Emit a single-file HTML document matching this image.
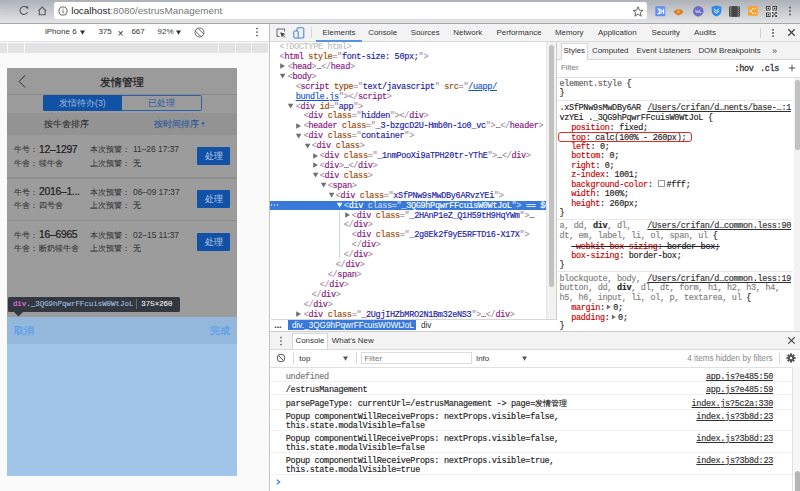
<!DOCTYPE html><html><head><meta charset="utf-8"><style>
html,body{margin:0;padding:0;width:800px;height:491px;overflow:hidden;background:#fff;position:relative}
body{font-family:"Liberation Sans",sans-serif}
.m{-webkit-text-stroke:0.15px}
</style></head><body>
<div style="position:absolute;left:0px;top:0px;width:800px;height:23px;background:linear-gradient(#adb1b8,#e3e4e6)"></div>
<div style="position:absolute;left:0px;top:23px;width:800px;height:1px;background:#a9a9a9"></div>
<div style="position:absolute;left:54.3px;top:1.7px;width:592.7px;height:17.4px;background:#fff;border-radius:2.5px"></div>
<svg style="position:absolute;left:0;top:4.5px" width="10" height="12"><path d="M-1 6 H8 M4.6 2.4 L8.1 6 L4.6 9.6" stroke="#c6c6c6" stroke-width="0.9" fill="none"/></svg>
<svg style="position:absolute;left:17.5px;top:4.9px" width="12" height="11"><path d="M9.3 3.2 A4 4 0 1 0 9.6 7.2" stroke="#5a5a5a" stroke-width="1.1" fill="none"/><path d="M7.2 1.2 L10.2 1.2 L10.2 4.2Z" fill="#5a5a5a"/></svg>
<svg style="position:absolute;left:36.5px;top:6px" width="11" height="10"><path d="M1.3 4.8 L5.2 1 L9.1 4.8 M2.3 4 V8.7 H8.1 V4" stroke="#5a5a5a" stroke-width="1.1" fill="none"/></svg>
<svg style="position:absolute;left:58px;top:6px" width="10" height="10"><circle cx="5" cy="5" r="4.1" stroke="#555" stroke-width="0.9" fill="none"/><rect x="4.55" y="4.2" width="0.9" height="3" fill="#555"/><rect x="4.55" y="2.5" width="0.9" height="0.9" fill="#555"/></svg>
<div style="position:absolute;left:71.2px;top:5.40px;line-height:12px;font-size:9.9px;font-family:'Liberation Sans', sans-serif;color:#222;white-space:pre;"><span style="color:#222">localhost</span><span style="color:#777">:8080/estrusManagement</span></div>
<svg style="position:absolute;left:632px;top:5.5px" width="12" height="11"><path d="M6 0.8 L7.4 4.2 L11 4.4 L8.2 6.7 L9.2 10.2 L6 8.2 L2.8 10.2 L3.8 6.7 L1 4.4 L4.6 4.2Z" stroke="#555" stroke-width="0.9" fill="none"/></svg>
<svg style="position:absolute;left:654.5px;top:5.5px" width="11" height="11"><rect x="0.3" y="0.3" width="10" height="10" rx="1.2" fill="#5f90ee"/><path d="M2.3 3 H4.3 V7.8 H2.3 M6 2.8 V8 M8.6 2.8 V8 M6 5.4 H8.6" stroke="#fff" stroke-width="1.1" fill="none"/></svg>
<svg style="position:absolute;left:673px;top:4.5px" width="11" height="12"><path d="M0.5 6.5 Q5.5 2 10.5 6.5 Q8 10 6 10 L5.5 11.5 L5 10 Q3 10 0.5 6.5Z" fill="#de7a26"/><path d="M3.5 5.8 L5.5 8 L7.5 5.8 L6.6 6.6 L5.5 5.2 L4.4 6.6Z" fill="#f6d24a"/><path d="M5.5 1 L6 3.5 L5 3.5Z" fill="#f0b060"/></svg>
<svg style="position:absolute;left:692.5px;top:5.5px" width="11" height="11"><circle cx="5.3" cy="5.3" r="4.9" fill="#6c6cc9"/><circle cx="5.3" cy="5.3" r="4.9" fill="none" stroke="#5858b0" stroke-width="0.5"/><path d="M2.5 3.8 L3.5 7 L4.6 4.6 L5.7 7 L6.7 3.8" stroke="#dcdcf5" stroke-width="0.8" fill="none"/><circle cx="7.8" cy="6.5" r="0.8" fill="#dcdcf5"/></svg>
<svg style="position:absolute;left:710.5px;top:5px" width="11" height="12"><path d="M5.5 0.4 Q8 1.5 10.3 1.6 V6 Q10.3 9.6 5.5 11.6 Q0.7 9.6 0.7 6 V1.6 Q3 1.5 5.5 0.4Z" fill="#2b86f0"/><path d="M2.8 3.8 L5.5 6 L8.2 3.8 M2.8 6 L5.5 8.2 L8.2 6" stroke="#fff" stroke-width="1" fill="none"/></svg>
<svg style="position:absolute;left:729px;top:5.5px" width="11" height="11"><rect x="0" y="0.3" width="11" height="10.4" rx="1" fill="#505050"/><rect x="3" y="0.3" width="5" height="10.4" fill="#454545"/><g fill="#9a9a9a"><rect x="1" y="1.3" width="1.3" height="1.2"/><rect x="1" y="3.6" width="1.3" height="1.2"/><rect x="1" y="5.9" width="1.3" height="1.2"/><rect x="1" y="8.2" width="1.3" height="1.2"/><rect x="8.7" y="1.3" width="1.3" height="1.2"/><rect x="8.7" y="3.6" width="1.3" height="1.2"/><rect x="8.7" y="5.9" width="1.3" height="1.2"/><rect x="8.7" y="8.2" width="1.3" height="1.2"/></g></svg>
<svg style="position:absolute;left:748.3px;top:5.8px" width="10" height="10"><rect x="0" y="0" width="9.8" height="9.8" rx="1" fill="#f5a234"/><g fill="#fff"><circle cx="2.5" cy="5" r="0.9"/><circle cx="5" cy="2.6" r="0.7"/><circle cx="7.4" cy="2.6" r="0.7"/><circle cx="5" cy="7.4" r="0.7"/><circle cx="7.4" cy="7.4" r="0.7"/></g><path d="M2.5 5 L5 2.6 M2.5 5 L5 7.4" stroke="#fff" stroke-width="0.6"/></svg>
<svg style="position:absolute;left:766px;top:5.5px" width="11" height="11"><rect x="0" y="0" width="11" height="11" fill="#e8e8e8"/><g fill="#3a3a3a"><rect x="0" y="0" width="4.6" height="4.6"/><rect x="6.4" y="0" width="4.6" height="4.6"/><rect x="0" y="6.4" width="4.6" height="4.6"/><rect x="6" y="6" width="1.6" height="1.6"/><rect x="9" y="6" width="2" height="1.6"/><rect x="7.6" y="7.6" width="1.6" height="1.6"/><rect x="6" y="9.2" width="1.6" height="1.8"/><rect x="9.2" y="9.2" width="1.8" height="1.8"/></g><g fill="#e8e8e8"><rect x="0.9" y="0.9" width="2.8" height="2.8"/><rect x="7.3" y="0.9" width="2.8" height="2.8"/><rect x="0.9" y="7.3" width="2.8" height="2.8"/></g><g fill="#222"><rect x="1.6" y="1.6" width="1.4" height="1.4"/><rect x="8" y="1.6" width="1.4" height="1.4"/><rect x="1.6" y="8" width="1.4" height="1.4"/></g></svg>
<svg style="position:absolute;left:788px;top:6px" width="4" height="11"><circle cx="2" cy="1.5" r="0.9" fill="#555"/><circle cx="2" cy="5" r="0.9" fill="#555"/><circle cx="2" cy="8.5" r="0.9" fill="#555"/></svg>
<div style="position:absolute;left:0px;top:24px;width:269px;height:467px;background:#fafafa"></div>
<div style="position:absolute;left:0px;top:24px;width:269px;height:17.5px;background:#fff"></div>
<div style="position:absolute;left:0px;top:41.3px;width:269px;height:1px;background:#e2e2e2"></div>
<div style="position:absolute;left:45px;top:27.00px;line-height:10px;font-size:8px;font-family:'Liberation Sans', sans-serif;color:#333;white-space:pre;">iPhone 6</div>
<svg style="position:absolute;left:79.5px;top:29.5px" width="6" height="6"><path d="M0 0.5 L5 0.5 L2.5 4.8Z" fill="#333"/></svg>
<div style="position:absolute;left:98.4px;top:27.00px;line-height:10px;font-size:8px;font-family:'Liberation Sans', sans-serif;color:#333;white-space:pre;">375</div>
<div style="position:absolute;left:117.6px;top:27.40px;line-height:12px;font-size:10.5px;font-family:'Liberation Sans', sans-serif;color:#333;white-space:pre;">×</div>
<div style="position:absolute;left:131.4px;top:27.00px;line-height:10px;font-size:8px;font-family:'Liberation Sans', sans-serif;color:#333;white-space:pre;">667</div>
<div style="position:absolute;left:157.5px;top:27.00px;line-height:10px;font-size:8px;font-family:'Liberation Sans', sans-serif;color:#333;white-space:pre;">92%</div>
<svg style="position:absolute;left:176px;top:29.5px" width="6" height="6"><path d="M0 0.5 L5 0.5 L2.5 4.8Z" fill="#333"/></svg>
<svg style="position:absolute;left:193.9px;top:26.6px" width="11" height="11"><circle cx="5.5" cy="5.5" r="4.5" stroke="#5a5a5a" stroke-width="0.9" fill="none"/><rect x="3.6" y="1.2" width="3.8" height="8.6" rx="0.5" transform="rotate(-45 5.5 5.5)" stroke="#5a5a5a" stroke-width="0.9" fill="#fff"/></svg>
<svg style="position:absolute;left:254.5px;top:27px" width="4" height="11"><circle cx="2" cy="1.5" r="0.85" fill="#444"/><circle cx="2" cy="5" r="0.85" fill="#444"/><circle cx="2" cy="8.5" r="0.85" fill="#444"/></svg>
<div style="position:absolute;left:0px;top:43px;width:7.3px;height:10.2px;background:#e3e3e3"></div>
<div style="position:absolute;left:8.3px;top:43px;width:16.0px;height:10.2px;background:#e3e3e3"></div>
<div style="position:absolute;left:25.3px;top:43px;width:193.0px;height:10.2px;background:#e3e3e3"></div>
<div style="position:absolute;left:219.3px;top:43px;width:16.0px;height:10.2px;background:#e3e3e3"></div>
<div style="position:absolute;left:236.3px;top:43px;width:15.0px;height:10.2px;background:#e3e3e3"></div>
<div style="position:absolute;left:252.3px;top:43px;width:16.0px;height:10.2px;background:#e3e3e3"></div>
<div style="position:absolute;left:7px;top:68px;width:229.8px;height:26.5px;background:#9b9b9b"></div>
<div style="position:absolute;left:7px;top:94.2px;width:229.8px;height:0.6px;background:#8a8a8a"></div>
<svg style="position:absolute;left:18px;top:74px" width="10" height="15"><path d="M7.2 1.1 L1.2 7.5 L7.2 13.6" stroke="#2e2e2e" stroke-width="1" fill="none"/></svg>
<div style="position:absolute;left:7px;top:74.60px;line-height:14px;font-size:10.8px;font-family:'Liberation Sans', sans-serif;color:#1a1a1a;white-space:pre;width:229.8px;text-align:center;-webkit-text-stroke:0.22px">发情管理</div>
<div style="position:absolute;left:7px;top:94.8px;width:229.8px;height:18.6px;background:#9b9b9b"></div>
<div style="position:absolute;left:42.6px;top:95.4px;width:159px;height:15.2px;border:0.9px solid #2b62ae;box-sizing:border-box;border-radius:1.5px"></div>
<div style="position:absolute;left:42.6px;top:95.4px;width:79.5px;height:15.2px;background:#1252a4;border-radius:1.5px 0 0 1.5px"></div>
<div style="position:absolute;left:42.6px;top:96.80px;line-height:12px;font-size:8.6px;font-family:'Liberation Sans', sans-serif;color:#9bb5d8;white-space:pre;width:79.5px;text-align:center">发情待办(3)</div>
<div style="position:absolute;left:122.1px;top:96.80px;line-height:12px;font-size:8.6px;font-family:'Liberation Sans', sans-serif;color:#1f5aa8;white-space:pre;width:79.5px;text-align:center">已处理</div>
<div style="position:absolute;left:7px;top:113.4px;width:229.8px;height:21.6px;background:#939393"></div>
<div style="position:absolute;left:43.5px;top:117.60px;line-height:12px;font-size:8.6px;font-family:'Liberation Sans', sans-serif;color:#2a2a2a;white-space:pre;-webkit-text-stroke:0.08px">按牛舍排序</div>
<div style="position:absolute;left:153.6px;top:117.60px;line-height:12px;font-size:8.6px;font-family:'Liberation Sans', sans-serif;color:#1f55a0;white-space:pre;-webkit-text-stroke:0.08px">按时间排序</div>
<svg style="position:absolute;left:200.5px;top:121px" width="4" height="7"><path d="M2 0.5 L3.6 3 L0.4 3Z" fill="#1f55a0"/><path d="M2 5.8 L3.6 3.5 L0.4 3.5Z" fill="#5d7fae"/></svg>
<div style="position:absolute;left:7px;top:135px;width:229.8px;height:182px;background:#9c9c9c"></div>
<div style="position:absolute;left:13.5px;top:143.40px;line-height:12px;font-size:8.4px;font-family:'Liberation Sans', sans-serif;color:#383838;white-space:pre;-webkit-text-stroke:0.08px">牛号：</div>
<div style="position:absolute;left:39px;top:142.60px;line-height:13px;font-size:10.4px;font-family:'Liberation Sans', sans-serif;color:#222;white-space:pre;-webkit-text-stroke:0.22px #222;letter-spacing:-0.3px">12–1297</div>
<div style="position:absolute;left:90px;top:143.40px;line-height:12px;font-size:8.4px;font-family:'Liberation Sans', sans-serif;color:#383838;white-space:pre;-webkit-text-stroke:0.08px">本次预警：</div>
<div style="position:absolute;left:133px;top:143.40px;line-height:12px;font-size:8.4px;font-family:'Liberation Sans', sans-serif;color:#383838;white-space:pre;-webkit-text-stroke:0.08px">11–26 17:37</div>
<div style="position:absolute;left:13.5px;top:156.60px;line-height:12px;font-size:8.4px;font-family:'Liberation Sans', sans-serif;color:#383838;white-space:pre;-webkit-text-stroke:0.08px">牛舍：</div>
<div style="position:absolute;left:39px;top:156.60px;line-height:12px;font-size:8.4px;font-family:'Liberation Sans', sans-serif;color:#383838;white-space:pre;-webkit-text-stroke:0.08px">犊牛舍</div>
<div style="position:absolute;left:90px;top:156.60px;line-height:12px;font-size:8.4px;font-family:'Liberation Sans', sans-serif;color:#383838;white-space:pre;-webkit-text-stroke:0.08px">上次预警：</div>
<div style="position:absolute;left:133px;top:156.60px;line-height:12px;font-size:8.4px;font-family:'Liberation Sans', sans-serif;color:#383838;white-space:pre;-webkit-text-stroke:0.08px">无</div>
<div style="position:absolute;left:197.2px;top:147.1px;width:33.2px;height:18.1px;background:#1252a6;border-radius:1px;color:#b3c6e2;font-size:8.6px;line-height:18.1px;text-align:center;-webkit-text-stroke:0.05px">处理</div>
<div style="position:absolute;left:7px;top:177.15px;width:229.8px;height:1.6px;background:#8d8d8d"></div>
<div style="position:absolute;left:13.5px;top:186.15px;line-height:12px;font-size:8.4px;font-family:'Liberation Sans', sans-serif;color:#383838;white-space:pre;-webkit-text-stroke:0.08px">牛号：</div>
<div style="position:absolute;left:39px;top:185.35px;line-height:13px;font-size:10.4px;font-family:'Liberation Sans', sans-serif;color:#222;white-space:pre;-webkit-text-stroke:0.22px #222;letter-spacing:-0.3px">2016–1...</div>
<div style="position:absolute;left:90px;top:186.15px;line-height:12px;font-size:8.4px;font-family:'Liberation Sans', sans-serif;color:#383838;white-space:pre;-webkit-text-stroke:0.08px">本次预警：</div>
<div style="position:absolute;left:133px;top:186.15px;line-height:12px;font-size:8.4px;font-family:'Liberation Sans', sans-serif;color:#383838;white-space:pre;-webkit-text-stroke:0.08px">06–09 17:37</div>
<div style="position:absolute;left:13.5px;top:199.35px;line-height:12px;font-size:8.4px;font-family:'Liberation Sans', sans-serif;color:#383838;white-space:pre;-webkit-text-stroke:0.08px">牛舍：</div>
<div style="position:absolute;left:39px;top:199.35px;line-height:12px;font-size:8.4px;font-family:'Liberation Sans', sans-serif;color:#383838;white-space:pre;-webkit-text-stroke:0.08px">四号舍</div>
<div style="position:absolute;left:90px;top:199.35px;line-height:12px;font-size:8.4px;font-family:'Liberation Sans', sans-serif;color:#383838;white-space:pre;-webkit-text-stroke:0.08px">上次预警：</div>
<div style="position:absolute;left:133px;top:199.35px;line-height:12px;font-size:8.4px;font-family:'Liberation Sans', sans-serif;color:#383838;white-space:pre;-webkit-text-stroke:0.08px">无</div>
<div style="position:absolute;left:197.2px;top:189.85px;width:33.2px;height:18.1px;background:#1252a6;border-radius:1px;color:#b3c6e2;font-size:8.6px;line-height:18.1px;text-align:center;-webkit-text-stroke:0.05px">处理</div>
<div style="position:absolute;left:7px;top:219.9px;width:229.8px;height:1.6px;background:#8d8d8d"></div>
<div style="position:absolute;left:13.5px;top:228.90px;line-height:12px;font-size:8.4px;font-family:'Liberation Sans', sans-serif;color:#383838;white-space:pre;-webkit-text-stroke:0.08px">牛号：</div>
<div style="position:absolute;left:39px;top:228.10px;line-height:13px;font-size:10.4px;font-family:'Liberation Sans', sans-serif;color:#222;white-space:pre;-webkit-text-stroke:0.22px #222;letter-spacing:-0.3px">16–6965</div>
<div style="position:absolute;left:90px;top:228.90px;line-height:12px;font-size:8.4px;font-family:'Liberation Sans', sans-serif;color:#383838;white-space:pre;-webkit-text-stroke:0.08px">本次预警：</div>
<div style="position:absolute;left:133px;top:228.90px;line-height:12px;font-size:8.4px;font-family:'Liberation Sans', sans-serif;color:#383838;white-space:pre;-webkit-text-stroke:0.08px">02–15 11:37</div>
<div style="position:absolute;left:13.5px;top:242.10px;line-height:12px;font-size:8.4px;font-family:'Liberation Sans', sans-serif;color:#383838;white-space:pre;-webkit-text-stroke:0.08px">牛舍：</div>
<div style="position:absolute;left:39px;top:242.10px;line-height:12px;font-size:8.4px;font-family:'Liberation Sans', sans-serif;color:#383838;white-space:pre;-webkit-text-stroke:0.08px">断奶犊牛舍</div>
<div style="position:absolute;left:90px;top:242.10px;line-height:12px;font-size:8.4px;font-family:'Liberation Sans', sans-serif;color:#383838;white-space:pre;-webkit-text-stroke:0.08px">上次预警：</div>
<div style="position:absolute;left:133px;top:242.10px;line-height:12px;font-size:8.4px;font-family:'Liberation Sans', sans-serif;color:#383838;white-space:pre;-webkit-text-stroke:0.08px">无</div>
<div style="position:absolute;left:197.2px;top:232.6px;width:33.2px;height:18.1px;background:#1252a6;border-radius:1px;color:#b3c6e2;font-size:8.6px;line-height:18.1px;text-align:center;-webkit-text-stroke:0.05px">处理</div>
<div style="position:absolute;left:7px;top:316.7px;width:229.8px;height:159.2px;background:#a0c5e8"></div>
<div style="position:absolute;left:7px;top:316.7px;width:229.8px;height:26.9px;background:#93b8dc"></div>
<div style="position:absolute;left:13.6px;top:325.00px;line-height:12px;font-size:9.6px;font-family:'Liberation Sans', sans-serif;color:#58a0e8;white-space:pre;-webkit-text-stroke:0.22px">取消</div>
<div style="position:absolute;left:210px;top:325.00px;line-height:12px;font-size:9.6px;font-family:'Liberation Sans', sans-serif;color:#58a0e8;white-space:pre;-webkit-text-stroke:0.22px">完成</div>
<div style="position:absolute;left:7.5px;top:296.6px;width:172.5px;height:15px;background:#333740;border-radius:1.5px"></div>
<svg style="position:absolute;left:14px;top:311.5px" width="9" height="5"><path d="M0 0 L9 0 L4.5 4.5Z" fill="#333740"/></svg>
<div class="m" style="position:absolute;left:12.9px;top:299.10px;line-height:10px;font-size:7.45px;font-family:'Liberation Mono', monospace;color:#222;white-space:pre;"><span style="color:#ee78e6">div</span><span style="color:#9bbbdc">._3QG9hPqwrFFcuisW0WtJoL</span></div>
<div style="position:absolute;left:136.2px;top:299px;width:0.7px;height:10px;background:#6a6a6a"></div>
<div class="m" style="position:absolute;left:141.3px;top:299.10px;line-height:10px;font-size:7.45px;font-family:'Liberation Mono', monospace;color:#222;white-space:pre;"><span style="color:#e8e8e8">375×260</span></div>
<div style="position:absolute;left:269px;top:24px;width:1px;height:467px;background:#c3c3c3"></div>
<div style="position:absolute;left:270px;top:24px;width:530px;height:17.5px;background:#f3f3f3"></div>
<div style="position:absolute;left:270px;top:41px;width:530px;height:0.9px;background:#d9d9d9"></div>
<svg style="position:absolute;left:276px;top:27.5px" width="11" height="10"><path d="M3.5 8.5 H1 V1 H8.5 V3.5" stroke="#5a5a5a" stroke-width="0.9" fill="none"/><path d="M4.2 4.2 L9.6 6.1 L7.2 7 L9.2 9 L8.7 9.5 L6.7 7.5 L5.9 9.8Z" fill="#444"/></svg>
<svg style="position:absolute;left:293px;top:26.5px" width="12" height="12"><rect x="4" y="0.8" width="6.8" height="10.2" rx="0.8" stroke="#3b7ddd" stroke-width="1" fill="none"/><rect x="0.8" y="4" width="4.4" height="7" rx="0.6" fill="#f3f3f3" stroke="#3b7ddd" stroke-width="1"/></svg>
<div style="position:absolute;left:311px;top:27px;width:0.7px;height:11px;background:#d6d6d6"></div>
<div style="position:absolute;left:322.6px;top:27.80px;line-height:10px;font-size:7.9px;font-family:'Liberation Sans', sans-serif;color:#333;white-space:pre;">Elements</div>
<div style="position:absolute;left:368.2px;top:27.80px;line-height:10px;font-size:7.9px;font-family:'Liberation Sans', sans-serif;color:#333;white-space:pre;">Console</div>
<div style="position:absolute;left:410.7px;top:27.80px;line-height:10px;font-size:7.9px;font-family:'Liberation Sans', sans-serif;color:#333;white-space:pre;">Sources</div>
<div style="position:absolute;left:453.3px;top:27.80px;line-height:10px;font-size:7.9px;font-family:'Liberation Sans', sans-serif;color:#333;white-space:pre;">Network</div>
<div style="position:absolute;left:496.5px;top:27.80px;line-height:10px;font-size:7.9px;font-family:'Liberation Sans', sans-serif;color:#333;white-space:pre;">Performance</div>
<div style="position:absolute;left:555px;top:27.80px;line-height:10px;font-size:7.9px;font-family:'Liberation Sans', sans-serif;color:#333;white-space:pre;">Memory</div>
<div style="position:absolute;left:598px;top:27.80px;line-height:10px;font-size:7.9px;font-family:'Liberation Sans', sans-serif;color:#333;white-space:pre;">Application</div>
<div style="position:absolute;left:651.5px;top:27.80px;line-height:10px;font-size:7.9px;font-family:'Liberation Sans', sans-serif;color:#333;white-space:pre;">Security</div>
<div style="position:absolute;left:694px;top:27.80px;line-height:10px;font-size:7.9px;font-family:'Liberation Sans', sans-serif;color:#333;white-space:pre;">Audits</div>
<div style="position:absolute;left:315.9px;top:40.2px;width:46.1px;height:1.8px;background:#5a92e2"></div>
<div style="position:absolute;left:760px;top:27.5px;width:0.8px;height:10px;background:#d0d0d0"></div>
<svg style="position:absolute;left:771.4px;top:27.6px" width="4" height="11"><circle cx="2" cy="1.8" r="0.9" fill="#444"/><circle cx="2" cy="4.9" r="0.9" fill="#444"/><circle cx="2" cy="8.1" r="0.9" fill="#444"/></svg>
<svg style="position:absolute;left:787.3px;top:28px" width="9" height="9"><path d="M1.3 1.3 L7.7 7.7 M7.7 1.3 L1.3 7.7" stroke="#444" stroke-width="1.3" fill="none"/></svg>
<div class="m" style="position:absolute;left:279.6px;top:42.20px;line-height:10px;font-size:8.5px;font-family:'Liberation Mono', monospace;color:#222;white-space:pre;letter-spacing:-0.31px;"><span style="color:#c0c0c0">&lt;!DOCTYPE html&gt;</span></div>
<div class="m" style="position:absolute;left:279.6px;top:52.01px;line-height:10px;font-size:8.5px;font-family:'Liberation Mono', monospace;color:#222;white-space:pre;letter-spacing:-0.31px;"><span style="color:#a894a6">&lt;</span><span style="color:#881280">html</span> <span style="color:#994500">style</span><span style="color:#a894a6">=&quot;</span><span style="color:#1a1aa6">font-size: 50px;</span><span style="color:#a894a6">&quot;</span><span style="color:#a894a6">&gt;</span></div>
<svg style="position:absolute;left:280.43px;top:63.31999999999999px" width="6" height="6"><path d="M0.2 0.3 L5 3 L0.2 5.7Z" fill="#6e6e6e"/></svg>
<div class="m" style="position:absolute;left:287.63px;top:61.92px;line-height:10px;font-size:8.5px;font-family:'Liberation Mono', monospace;color:#222;white-space:pre;letter-spacing:-0.31px;"><span style="color:#a894a6">&lt;</span><span style="color:#881280">head</span><span style="color:#a894a6">&gt;</span><span style="color:#333">…</span><span style="color:#a894a6">&lt;/</span><span style="color:#881280">head</span><span style="color:#a894a6">&gt;</span></div>
<svg style="position:absolute;left:280.43px;top:73.23px" width="6" height="6"><path d="M-0.2 0.7 L5.4 0.7 L2.6 5.5Z" fill="#6e6e6e"/></svg>
<div class="m" style="position:absolute;left:287.63px;top:71.83px;line-height:10px;font-size:8.5px;font-family:'Liberation Mono', monospace;color:#222;white-space:pre;letter-spacing:-0.31px;"><span style="color:#a894a6">&lt;</span><span style="color:#881280">body</span><span style="color:#a894a6">&gt;</span></div>
<div class="m" style="position:absolute;left:295.66px;top:81.74px;line-height:10px;font-size:8.5px;font-family:'Liberation Mono', monospace;color:#222;white-space:pre;letter-spacing:-0.31px;"><span style="color:#a894a6">&lt;</span><span style="color:#881280">script</span> <span style="color:#994500">type</span><span style="color:#a894a6">=&quot;</span><span style="color:#1a1aa6">text/javascript</span><span style="color:#a894a6">&quot;</span> <span style="color:#994500">src</span><span style="color:#a894a6">=&quot;</span><span style="color:#1155cc;text-decoration:underline">/uapp/</span></div>
<div class="m" style="position:absolute;left:295.66px;top:91.65px;line-height:10px;font-size:8.5px;font-family:'Liberation Mono', monospace;color:#222;white-space:pre;letter-spacing:-0.31px;"><span style="color:#1155cc;text-decoration:underline">bundle.js</span><span style="color:#a894a6">&quot;</span><span style="color:#a894a6">&gt;</span><span style="color:#a894a6">&lt;/</span><span style="color:#881280">script</span><span style="color:#a894a6">&gt;</span></div>
<svg style="position:absolute;left:288.46000000000004px;top:102.96000000000001px" width="6" height="6"><path d="M-0.2 0.7 L5.4 0.7 L2.6 5.5Z" fill="#6e6e6e"/></svg>
<div class="m" style="position:absolute;left:295.66px;top:101.56px;line-height:10px;font-size:8.5px;font-family:'Liberation Mono', monospace;color:#222;white-space:pre;letter-spacing:-0.31px;"><span style="color:#a894a6">&lt;</span><span style="color:#881280">div</span> <span style="color:#994500">id</span><span style="color:#a894a6">=&quot;</span><span style="color:#1a1aa6">app</span><span style="color:#a894a6">&quot;</span><span style="color:#a894a6">&gt;</span></div>
<div class="m" style="position:absolute;left:303.69px;top:111.47px;line-height:10px;font-size:8.5px;font-family:'Liberation Mono', monospace;color:#222;white-space:pre;letter-spacing:-0.31px;"><span style="color:#a894a6">&lt;</span><span style="color:#881280">div</span> <span style="color:#994500">class</span><span style="color:#a894a6">=&quot;</span><span style="color:#1a1aa6">hidden</span><span style="color:#a894a6">&quot;</span><span style="color:#a894a6">&gt;</span><span style="color:#a894a6">&lt;/</span><span style="color:#881280">div</span><span style="color:#a894a6">&gt;</span></div>
<svg style="position:absolute;left:296.49px;top:122.78px" width="6" height="6"><path d="M0.2 0.3 L5 3 L0.2 5.7Z" fill="#6e6e6e"/></svg>
<div class="m" style="position:absolute;left:303.69px;top:121.38px;line-height:10px;font-size:8.5px;font-family:'Liberation Mono', monospace;color:#222;white-space:pre;letter-spacing:-0.31px;"><span style="color:#a894a6">&lt;</span><span style="color:#881280">header</span> <span style="color:#994500">class</span><span style="color:#a894a6">=&quot;</span><span style="color:#1a1aa6">_3-bzgcD2U-Hmb0n-1o0_vc</span><span style="color:#a894a6">&quot;</span><span style="color:#a894a6">&gt;</span><span style="color:#333">…</span><span style="color:#a894a6">&lt;/</span><span style="color:#881280">header</span><span style="color:#a894a6">&gt;</span></div>
<svg style="position:absolute;left:296.49px;top:132.69px" width="6" height="6"><path d="M-0.2 0.7 L5.4 0.7 L2.6 5.5Z" fill="#6e6e6e"/></svg>
<div class="m" style="position:absolute;left:303.69px;top:131.29px;line-height:10px;font-size:8.5px;font-family:'Liberation Mono', monospace;color:#222;white-space:pre;letter-spacing:-0.31px;"><span style="color:#a894a6">&lt;</span><span style="color:#881280">div</span> <span style="color:#994500">class</span><span style="color:#a894a6">=&quot;</span><span style="color:#1a1aa6">container</span><span style="color:#a894a6">&quot;</span><span style="color:#a894a6">&gt;</span></div>
<svg style="position:absolute;left:304.52000000000004px;top:142.6px" width="6" height="6"><path d="M-0.2 0.7 L5.4 0.7 L2.6 5.5Z" fill="#6e6e6e"/></svg>
<div class="m" style="position:absolute;left:311.72px;top:141.20px;line-height:10px;font-size:8.5px;font-family:'Liberation Mono', monospace;color:#222;white-space:pre;letter-spacing:-0.31px;"><span style="color:#a894a6">&lt;</span><span style="color:#881280">div</span> <span style="color:#994500">class</span><span style="color:#a894a6">&gt;</span></div>
<svg style="position:absolute;left:312.55px;top:152.51px" width="6" height="6"><path d="M0.2 0.3 L5 3 L0.2 5.7Z" fill="#6e6e6e"/></svg>
<div class="m" style="position:absolute;left:319.75px;top:151.11px;line-height:10px;font-size:8.5px;font-family:'Liberation Mono', monospace;color:#222;white-space:pre;letter-spacing:-0.31px;"><span style="color:#a894a6">&lt;</span><span style="color:#881280">div</span> <span style="color:#994500">class</span><span style="color:#a894a6">=&quot;</span><span style="color:#1a1aa6">_1nmPooXi9aTPH20tr-YThE</span><span style="color:#a894a6">&quot;</span><span style="color:#a894a6">&gt;</span><span style="color:#333">…</span><span style="color:#a894a6">&lt;/</span><span style="color:#881280">div</span><span style="color:#a894a6">&gt;</span></div>
<svg style="position:absolute;left:312.55px;top:162.42000000000002px" width="6" height="6"><path d="M0.2 0.3 L5 3 L0.2 5.7Z" fill="#6e6e6e"/></svg>
<div class="m" style="position:absolute;left:319.75px;top:161.02px;line-height:10px;font-size:8.5px;font-family:'Liberation Mono', monospace;color:#222;white-space:pre;letter-spacing:-0.31px;"><span style="color:#a894a6">&lt;</span><span style="color:#881280">div</span><span style="color:#a894a6">&gt;</span><span style="color:#333">…</span><span style="color:#a894a6">&lt;/</span><span style="color:#881280">div</span><span style="color:#a894a6">&gt;</span></div>
<svg style="position:absolute;left:312.55px;top:172.33px" width="6" height="6"><path d="M-0.2 0.7 L5.4 0.7 L2.6 5.5Z" fill="#6e6e6e"/></svg>
<div class="m" style="position:absolute;left:319.75px;top:170.93px;line-height:10px;font-size:8.5px;font-family:'Liberation Mono', monospace;color:#222;white-space:pre;letter-spacing:-0.31px;"><span style="color:#a894a6">&lt;</span><span style="color:#881280">div</span> <span style="color:#994500">class</span><span style="color:#a894a6">&gt;</span></div>
<svg style="position:absolute;left:320.58000000000004px;top:182.24px" width="6" height="6"><path d="M-0.2 0.7 L5.4 0.7 L2.6 5.5Z" fill="#6e6e6e"/></svg>
<div class="m" style="position:absolute;left:327.78000000000003px;top:180.84px;line-height:10px;font-size:8.5px;font-family:'Liberation Mono', monospace;color:#222;white-space:pre;letter-spacing:-0.31px;"><span style="color:#a894a6">&lt;</span><span style="color:#881280">span</span><span style="color:#a894a6">&gt;</span></div>
<svg style="position:absolute;left:328.61px;top:192.15px" width="6" height="6"><path d="M-0.2 0.7 L5.4 0.7 L2.6 5.5Z" fill="#6e6e6e"/></svg>
<div class="m" style="position:absolute;left:335.81px;top:190.75px;line-height:10px;font-size:8.5px;font-family:'Liberation Mono', monospace;color:#222;white-space:pre;letter-spacing:-0.31px;"><span style="color:#a894a6">&lt;</span><span style="color:#881280">div</span> <span style="color:#994500">class</span><span style="color:#a894a6">=&quot;</span><span style="color:#1a1aa6">xSfPNw9sMwDBy6ARvzYEi</span><span style="color:#a894a6">&quot;</span><span style="color:#a894a6">&gt;</span></div>
<div style="position:absolute;left:270px;top:200.7px;width:276.4px;height:9.1px;background:#3879d9"></div>
<svg style="position:absolute;left:270px;top:203px" width="10" height="4"><g fill="#fff"><circle cx="1.6" cy="2" r="0.7"/><circle cx="4.5" cy="2" r="0.7"/><circle cx="7.4" cy="2" r="0.7"/></g></svg>
<svg style="position:absolute;left:336.64000000000004px;top:202.06px" width="6" height="6"><path d="M-0.2 0.7 L5.4 0.7 L2.6 5.5Z" fill="#fff"/></svg>
<div class="m" style="position:absolute;left:343.84000000000003px;top:200.66px;line-height:10px;font-size:8.5px;font-family:'Liberation Mono', monospace;color:#222;white-space:pre;letter-spacing:-0.31px;"><span style="color:#c9dbf5">&lt;</span><span style="color:#fff">div</span> <span style="color:#c9dbf5">class</span><span style="color:#c9dbf5">="</span><span style="color:#fff">_3QG9hPqwrFFcuisW0WtJoL</span><span style="color:#c9dbf5">"&gt;</span><span style="color:#fff"> == $0</span></div>
<div style="position:absolute;left:338.5px;top:211px;width:0.8px;height:47px;background:#c6d7f0"></div>
<svg style="position:absolute;left:344.67px;top:211.97px" width="6" height="6"><path d="M0.2 0.3 L5 3 L0.2 5.7Z" fill="#6e6e6e"/></svg>
<div class="m" style="position:absolute;left:351.87px;top:210.57px;line-height:10px;font-size:8.5px;font-family:'Liberation Mono', monospace;color:#222;white-space:pre;letter-spacing:-0.31px;"><span style="color:#a894a6">&lt;</span><span style="color:#881280">div</span> <span style="color:#994500">class</span><span style="color:#a894a6">=&quot;</span><span style="color:#1a1aa6">_2HAnP1eZ_Q1H59tH9HqYWm</span><span style="color:#a894a6">&quot;</span><span style="color:#a894a6">&gt;</span><span style="color:#333">…</span></div>
<div class="m" style="position:absolute;left:343.84000000000003px;top:220.48px;line-height:10px;font-size:8.5px;font-family:'Liberation Mono', monospace;color:#222;white-space:pre;letter-spacing:-0.31px;"><span style="color:#a894a6">&lt;/</span><span style="color:#881280">div</span><span style="color:#a894a6">&gt;</span></div>
<div class="m" style="position:absolute;left:351.87px;top:230.39px;line-height:10px;font-size:8.5px;font-family:'Liberation Mono', monospace;color:#222;white-space:pre;letter-spacing:-0.31px;"><span style="color:#a894a6">&lt;</span><span style="color:#881280">div</span> <span style="color:#994500">class</span><span style="color:#a894a6">=&quot;</span><span style="color:#1a1aa6">_2g8Ek2f9yE5RFTD16-X17X</span><span style="color:#a894a6">&quot;</span><span style="color:#a894a6">&gt;</span></div>
<div class="m" style="position:absolute;left:351.87px;top:240.30px;line-height:10px;font-size:8.5px;font-family:'Liberation Mono', monospace;color:#222;white-space:pre;letter-spacing:-0.31px;"><span style="color:#a894a6">&lt;/</span><span style="color:#881280">div</span><span style="color:#a894a6">&gt;</span></div>
<div class="m" style="position:absolute;left:343.84000000000003px;top:250.21px;line-height:10px;font-size:8.5px;font-family:'Liberation Mono', monospace;color:#222;white-space:pre;letter-spacing:-0.31px;"><span style="color:#a894a6">&lt;/</span><span style="color:#881280">div</span><span style="color:#a894a6">&gt;</span></div>
<div class="m" style="position:absolute;left:335.81px;top:260.12px;line-height:10px;font-size:8.5px;font-family:'Liberation Mono', monospace;color:#222;white-space:pre;letter-spacing:-0.31px;"><span style="color:#a894a6">&lt;/</span><span style="color:#881280">div</span><span style="color:#a894a6">&gt;</span></div>
<div class="m" style="position:absolute;left:327.78000000000003px;top:270.03px;line-height:10px;font-size:8.5px;font-family:'Liberation Mono', monospace;color:#222;white-space:pre;letter-spacing:-0.31px;"><span style="color:#a894a6">&lt;/</span><span style="color:#881280">span</span><span style="color:#a894a6">&gt;</span></div>
<div class="m" style="position:absolute;left:319.75px;top:279.94px;line-height:10px;font-size:8.5px;font-family:'Liberation Mono', monospace;color:#222;white-space:pre;letter-spacing:-0.31px;"><span style="color:#a894a6">&lt;/</span><span style="color:#881280">div</span><span style="color:#a894a6">&gt;</span></div>
<div class="m" style="position:absolute;left:311.72px;top:289.85px;line-height:10px;font-size:8.5px;font-family:'Liberation Mono', monospace;color:#222;white-space:pre;letter-spacing:-0.31px;"><span style="color:#a894a6">&lt;/</span><span style="color:#881280">div</span><span style="color:#a894a6">&gt;</span></div>
<div class="m" style="position:absolute;left:303.69px;top:299.76px;line-height:10px;font-size:8.5px;font-family:'Liberation Mono', monospace;color:#222;white-space:pre;letter-spacing:-0.31px;"><span style="color:#a894a6">&lt;/</span><span style="color:#881280">div</span><span style="color:#a894a6">&gt;</span></div>
<svg style="position:absolute;left:296.49px;top:311.07px" width="6" height="6"><path d="M0.2 0.3 L5 3 L0.2 5.7Z" fill="#6e6e6e"/></svg>
<div class="m" style="position:absolute;left:303.69px;top:309.67px;line-height:10px;font-size:8.5px;font-family:'Liberation Mono', monospace;color:#222;white-space:pre;letter-spacing:-0.31px;"><span style="color:#a894a6">&lt;</span><span style="color:#881280">div</span> <span style="color:#994500">class</span><span style="color:#a894a6">=&quot;</span><span style="color:#1a1aa6">_2UgjIHZbMRO2N1Bm32eNS3</span><span style="color:#a894a6">&quot;</span><span style="color:#a894a6">&gt;</span><span style="color:#333">…</span><span style="color:#a894a6">&lt;/</span><span style="color:#881280">div</span><span style="color:#a894a6">&gt;</span></div>
<div style="position:absolute;left:546.4px;top:42px;width:10px;height:276.5px;background:#f2f2f2;border-left:0.5px solid #e6e6e6;box-sizing:border-box"></div>
<div style="position:absolute;left:549px;top:45px;width:5px;height:242.3px;background:#c1c1c1;border-radius:2.5px"></div>
<div style="position:absolute;left:556.3px;top:42px;width:0.8px;height:289px;background:#cdcdcd"></div>
<div style="position:absolute;left:270.5px;top:318.5px;width:286px;height:13px;background:#fff;border-top:0.8px solid #d6d6d6;box-sizing:border-box"></div>
<div style="position:absolute;left:274.3px;top:320.20px;line-height:10px;font-size:9.5px;font-family:'Liberation Sans', sans-serif;color:#222;white-space:pre;font-weight:bold;letter-spacing:-0.3px"><span style="color:#333">...</span></div>
<div style="position:absolute;left:287.6px;top:320.3px;width:128.9px;height:9.7px;background:#3879d9"></div>
<div style="position:absolute;left:292px;top:321.00px;line-height:10px;font-size:8.2px;font-family:'Liberation Sans', sans-serif;color:#fff;white-space:pre;">div._3QG9hPqwrFFcuisW0WtJoL</div>
<div style="position:absolute;left:421px;top:321.00px;line-height:10px;font-size:8.2px;font-family:'Liberation Sans', sans-serif;color:#333;white-space:pre;">div</div>
<div style="position:absolute;left:557.1px;top:42.1px;width:242.89999999999998px;height:289px;background:#fff"></div>
<div style="position:absolute;left:557.1px;top:42.1px;width:242.89999999999998px;height:18.1px;background:#f3f3f3;border-bottom:0.8px solid #d3d3d3;box-sizing:border-box"></div>
<div style="position:absolute;left:560.7px;top:43.4px;width:27.7px;height:16.8px;background:#fff;border:0.8px solid #d6d6d6;border-bottom:none;box-sizing:border-box"></div>
<div style="position:absolute;left:563.5px;top:46.20px;line-height:10px;font-size:7.9px;font-family:'Liberation Sans', sans-serif;color:#333;white-space:pre;">Styles</div>
<div style="position:absolute;left:592px;top:46.20px;line-height:10px;font-size:7.9px;font-family:'Liberation Sans', sans-serif;color:#333;white-space:pre;">Computed</div>
<div style="position:absolute;left:636.6px;top:46.20px;line-height:10px;font-size:7.9px;font-family:'Liberation Sans', sans-serif;color:#333;white-space:pre;">Event Listeners</div>
<div style="position:absolute;left:698.4px;top:46.20px;line-height:10px;font-size:7.9px;font-family:'Liberation Sans', sans-serif;color:#333;white-space:pre;">DOM Breakpoints</div>
<div style="position:absolute;left:772px;top:45.80px;line-height:10px;font-size:9px;font-family:'Liberation Sans', sans-serif;color:#444;white-space:pre;">»</div>
<div style="position:absolute;left:561px;top:62.80px;line-height:10px;font-size:7.9px;font-family:'Liberation Sans', sans-serif;color:#777;white-space:pre;">Filter</div>
<div class="m" style="position:absolute;left:734.4px;top:63.70px;line-height:10px;font-size:8.5px;font-family:'Liberation Mono', monospace;color:#333;white-space:pre;letter-spacing:-0.31px;-webkit-text-stroke:0.3px #333">:hov</div>
<div class="m" style="position:absolute;left:760px;top:63.70px;line-height:10px;font-size:8.5px;font-family:'Liberation Mono', monospace;color:#333;white-space:pre;letter-spacing:-0.31px;-webkit-text-stroke:0.3px #333">.cls</div>
<svg style="position:absolute;left:787.5px;top:64.3px" width="8" height="8"><path d="M4 0.6 V7.4 M0.6 4 H7.4" stroke="#555" stroke-width="1"/></svg>
<div style="position:absolute;left:557.1px;top:77px;width:242.89999999999998px;height:0.8px;background:#e0e0e0"></div>
<div style="position:absolute;left:793.5px;top:77.8px;width:6.5px;height:253px;background:#f2f2f2"></div>
<div style="position:absolute;left:795px;top:80px;width:4.5px;height:70px;background:#c1c1c1;border-radius:2px"></div>
<div class="m" style="position:absolute;left:559.4px;top:79.00px;line-height:10px;font-size:8.5px;font-family:'Liberation Mono', monospace;color:#222;white-space:pre;letter-spacing:-0.31px;"><span style="color:#5e5e5e">element.style</span> {</div>
<div class="m" style="position:absolute;left:559.4px;top:88.40px;line-height:10px;font-size:8.5px;font-family:'Liberation Mono', monospace;color:#222;white-space:pre;letter-spacing:-0.31px;">}</div>
<div style="position:absolute;left:557.1px;top:100.2px;width:236.4px;height:0.8px;background:#e6e6e6"></div>
<div class="m" style="position:absolute;left:559.4px;top:103.40px;line-height:10px;font-size:8.5px;font-family:'Liberation Mono', monospace;color:#222;white-space:pre;letter-spacing:-0.31px;">.xSfPNw9sMwDBy6AR</div>
<div class="m" style="position:absolute;left:591px;top:103.40px;line-height:10px;font-size:8.5px;font-family:'Liberation Mono', monospace;color:#303030;white-space:pre;letter-spacing:-0.31px;text-decoration:underline;width:200px;text-align:right">/Users/crifan/d…nents/base-…:1</div>
<div class="m" style="position:absolute;left:559.4px;top:112.80px;line-height:10px;font-size:8.5px;font-family:'Liberation Mono', monospace;color:#222;white-space:pre;letter-spacing:-0.31px;">vzYEi ._3QG9hPqwrFFcuisW0WtJoL {</div>
<div class="m" style="position:absolute;left:571.25px;top:123.10px;line-height:10px;font-size:8.5px;font-family:'Liberation Mono', monospace;color:#222;white-space:pre;letter-spacing:-0.31px;"><span style="color:#c80000">position</span>: fixed;</div>
<div class="m" style="position:absolute;left:571.25px;top:132.50px;line-height:10px;font-size:8.5px;font-family:'Liberation Mono', monospace;color:#222;white-space:pre;letter-spacing:-0.31px;"><span style="color:#c80000">top</span>: calc(100% - 260px);</div>
<div style="position:absolute;left:557.8px;top:132px;width:134.6px;height:10.4px;border:1.5px solid #e62a2a;border-radius:3px;box-sizing:border-box"></div>
<div class="m" style="position:absolute;left:571.25px;top:141.90px;line-height:10px;font-size:8.5px;font-family:'Liberation Mono', monospace;color:#222;white-space:pre;letter-spacing:-0.31px;"><span style="color:#c80000">left</span>: 0;</div>
<div class="m" style="position:absolute;left:571.25px;top:151.40px;line-height:10px;font-size:8.5px;font-family:'Liberation Mono', monospace;color:#222;white-space:pre;letter-spacing:-0.31px;"><span style="color:#c80000">bottom</span>: 0;</div>
<div class="m" style="position:absolute;left:571.25px;top:160.90px;line-height:10px;font-size:8.5px;font-family:'Liberation Mono', monospace;color:#222;white-space:pre;letter-spacing:-0.31px;"><span style="color:#c80000">right</span>: 0;</div>
<div class="m" style="position:absolute;left:571.25px;top:170.40px;line-height:10px;font-size:8.5px;font-family:'Liberation Mono', monospace;color:#222;white-space:pre;letter-spacing:-0.31px;"><span style="color:#c80000">z-index</span>: 1001;</div>
<div class="m" style="position:absolute;left:571.25px;top:179.90px;line-height:10px;font-size:8.5px;font-family:'Liberation Mono', monospace;color:#222;white-space:pre;letter-spacing:-0.31px;"><span style="color:#c80000">background-color</span>: <span style="display:inline-block;width:5px;height:5px;border:0.7px solid #999;vertical-align:-0.5px;margin-right:2px"></span>#fff;</div>
<div class="m" style="position:absolute;left:571.25px;top:189.30px;line-height:10px;font-size:8.5px;font-family:'Liberation Mono', monospace;color:#222;white-space:pre;letter-spacing:-0.31px;"><span style="color:#c80000">width</span>: 100%;</div>
<div class="m" style="position:absolute;left:571.25px;top:198.70px;line-height:10px;font-size:8.5px;font-family:'Liberation Mono', monospace;color:#222;white-space:pre;letter-spacing:-0.31px;"><span style="color:#c80000">height</span>: 260px;</div>
<div class="m" style="position:absolute;left:559.4px;top:207.80px;line-height:10px;font-size:8.5px;font-family:'Liberation Mono', monospace;color:#222;white-space:pre;letter-spacing:-0.31px;">}</div>
<div style="position:absolute;left:557.1px;top:219.2px;width:236.4px;height:0.8px;background:#e6e6e6"></div>
<div class="m" style="position:absolute;left:559.4px;top:221.20px;line-height:10px;font-size:8.5px;font-family:'Liberation Mono', monospace;color:#222;white-space:pre;letter-spacing:-0.31px;"><span style="color:#808080">a, dd, </span><b style="color:#222">div</b><span style="color:#808080">, dl,</span></div>
<div class="m" style="position:absolute;left:591px;top:221.20px;line-height:10px;font-size:8.5px;font-family:'Liberation Mono', monospace;color:#303030;white-space:pre;letter-spacing:-0.31px;text-decoration:underline;width:200px;text-align:right">/Users/crifan/d…common.less:90</div>
<div class="m" style="position:absolute;left:559.4px;top:230.60px;line-height:10px;font-size:8.5px;font-family:'Liberation Mono', monospace;color:#222;white-space:pre;letter-spacing:-0.31px;"><span style="color:#808080">dt, em, label, li, ol, span, ul</span> {</div>
<div class="m" style="position:absolute;left:571.25px;top:241.60px;line-height:10px;font-size:8.5px;font-family:'Liberation Mono', monospace;color:#222;white-space:pre;letter-spacing:-0.31px;text-decoration:line-through;"><span style="color:#c80000">-webkit-box-sizing</span>: border-box;</div>
<div class="m" style="position:absolute;left:571.25px;top:251.00px;line-height:10px;font-size:8.5px;font-family:'Liberation Mono', monospace;color:#222;white-space:pre;letter-spacing:-0.31px;"><span style="color:#c80000">box-sizing</span>: border-box;</div>
<div class="m" style="position:absolute;left:559.4px;top:259.50px;line-height:10px;font-size:8.5px;font-family:'Liberation Mono', monospace;color:#222;white-space:pre;letter-spacing:-0.31px;">}</div>
<div style="position:absolute;left:557.1px;top:271.4px;width:236.4px;height:0.8px;background:#e6e6e6"></div>
<div class="m" style="position:absolute;left:559.4px;top:273.60px;line-height:10px;font-size:8.5px;font-family:'Liberation Mono', monospace;color:#222;white-space:pre;letter-spacing:-0.31px;"><span style="color:#808080">blockquote, body,</span></div>
<div class="m" style="position:absolute;left:591px;top:273.60px;line-height:10px;font-size:8.5px;font-family:'Liberation Mono', monospace;color:#303030;white-space:pre;letter-spacing:-0.31px;text-decoration:underline;width:200px;text-align:right">/Users/crifan/d…common.less:19</div>
<div class="m" style="position:absolute;left:559.4px;top:283.10px;line-height:10px;font-size:8.5px;font-family:'Liberation Mono', monospace;color:#222;white-space:pre;letter-spacing:-0.31px;"><span style="color:#808080">button, dd, </span><b style="color:#222">div</b><span style="color:#808080">, dl, dt, form, h1, h2, h3, h4,</span></div>
<div class="m" style="position:absolute;left:559.4px;top:292.50px;line-height:10px;font-size:8.5px;font-family:'Liberation Mono', monospace;color:#222;white-space:pre;letter-spacing:-0.31px;"><span style="color:#808080">h5, h6, input, li, ol, p, textarea, ul</span> {</div>
<div class="m" style="position:absolute;left:571.25px;top:303.10px;line-height:10px;font-size:8.5px;font-family:'Liberation Mono', monospace;color:#222;white-space:pre;letter-spacing:-0.31px;"><span style="color:#c80000">margin</span>:<svg width="8.5" height="6" style="vertical-align:0px"><path d="M1.8 0.6 L5.8 3 L1.8 5.4Z" fill="#6e6e6e"/></svg>0;</div>
<div class="m" style="position:absolute;left:571.25px;top:312.50px;line-height:10px;font-size:8.5px;font-family:'Liberation Mono', monospace;color:#222;white-space:pre;letter-spacing:-0.31px;"><span style="color:#c80000">padding</span>:<svg width="8.5" height="6" style="vertical-align:0px"><path d="M1.8 0.6 L5.8 3 L1.8 5.4Z" fill="#6e6e6e"/></svg>0;</div>
<div class="m" style="position:absolute;left:559.4px;top:321.30px;line-height:10px;font-size:8.5px;font-family:'Liberation Mono', monospace;color:#222;white-space:pre;letter-spacing:-0.31px;">}</div>
<div style="position:absolute;left:270px;top:331px;width:530px;height:19px;background:#f3f3f3;border-top:0.8px solid #cdcdcd;border-bottom:0.8px solid #dadada;box-sizing:border-box"></div>
<svg style="position:absolute;left:278.5px;top:335.5px" width="4" height="11"><circle cx="2" cy="1.5" r="0.85" fill="#555"/><circle cx="2" cy="5" r="0.85" fill="#555"/><circle cx="2" cy="8.5" r="0.85" fill="#555"/></svg>
<div style="position:absolute;left:292.3px;top:333px;width:35.7px;height:16.3px;background:#fff;border:0.8px solid #d6d6d6;border-bottom:none;box-sizing:border-box"></div>
<div style="position:absolute;left:295.5px;top:335.80px;line-height:10px;font-size:7.9px;font-family:'Liberation Sans', sans-serif;color:#333;white-space:pre;">Console</div>
<div style="position:absolute;left:331.8px;top:335.80px;line-height:10px;font-size:7.9px;font-family:'Liberation Sans', sans-serif;color:#333;white-space:pre;">What's New</div>
<svg style="position:absolute;left:787px;top:336px" width="9" height="9"><path d="M1.3 1.3 L7.7 7.7 M7.7 1.3 L1.3 7.7" stroke="#444" stroke-width="1.2" fill="none"/></svg>
<div style="position:absolute;left:270px;top:350px;width:530px;height:17.6px;background:#fff;border-bottom:0.8px solid #e0e0e0;box-sizing:border-box"></div>
<svg style="position:absolute;left:275.5px;top:353px" width="10" height="10"><circle cx="5" cy="5" r="3.8" stroke="#555" stroke-width="1" fill="none"/><path d="M2.4 2.4 L7.6 7.6" stroke="#555" stroke-width="1"/></svg>
<div style="position:absolute;left:293px;top:352px;width:0.8px;height:12px;background:#d6d6d6"></div>
<div style="position:absolute;left:299.3px;top:353.70px;line-height:10px;font-size:7.9px;font-family:'Liberation Sans', sans-serif;color:#333;white-space:pre;">top</div>
<svg style="position:absolute;left:342.5px;top:355.5px" width="6" height="6"><path d="M0 0.5 L5 0.5 L2.5 4.8Z" fill="#555"/></svg>
<div style="position:absolute;left:356px;top:352px;width:0.8px;height:12px;background:#d6d6d6"></div>
<div style="position:absolute;left:361px;top:352.1px;width:110.6px;height:12.4px;background:#fff;border:0.8px solid #dcdcdc;box-sizing:border-box"></div>
<div style="position:absolute;left:364.5px;top:353.50px;line-height:10px;font-size:7.9px;font-family:'Liberation Sans', sans-serif;color:#757575;white-space:pre;">Filter</div>
<div style="position:absolute;left:476px;top:353.70px;line-height:10px;font-size:7.9px;font-family:'Liberation Sans', sans-serif;color:#333;white-space:pre;">Info</div>
<svg style="position:absolute;left:521.8px;top:355.5px" width="6" height="6"><path d="M0 0.5 L5 0.5 L2.5 4.8Z" fill="#555"/></svg>
<div style="position:absolute;left:687.3px;top:353.70px;line-height:10px;font-size:8.15px;font-family:'Liberation Sans', sans-serif;color:#888;white-space:pre;">4 items hidden by filters</div>
<div style="position:absolute;left:779.2px;top:353px;width:0.8px;height:10.5px;background:#d6d6d6"></div>
<svg style="position:absolute;left:786px;top:353px" width="10" height="10"><g transform="translate(5 5)"><circle r="2.9" fill="#555"/><g fill="#555"><rect x="-1" y="-4.6" width="2" height="9.2"/><rect x="-1" y="-4.6" width="2" height="9.2" transform="rotate(45)"/><rect x="-1" y="-4.6" width="2" height="9.2" transform="rotate(90)"/><rect x="-1" y="-4.6" width="2" height="9.2" transform="rotate(135)"/></g><circle r="1.2" fill="#fff"/></g></svg>
<div style="position:absolute;left:792px;top:367.3px;width:8px;height:124px;background:#f7f7f7;border-left:0.6px solid #e3e3e3;box-sizing:border-box"></div>
<div style="position:absolute;left:795px;top:470.7px;width:5px;height:25px;background:#b5b5b5;border-radius:2.5px"></div>
<div class="m" style="position:absolute;left:285.8px;top:372.40px;line-height:10px;font-size:8.5px;font-family:'Liberation Mono', monospace;color:#777;white-space:pre;letter-spacing:-0.31px;">undefined</div>
<div class="m" style="position:absolute;left:573px;top:372.40px;line-height:10px;font-size:8.5px;font-family:'Liberation Mono', monospace;color:#303030;white-space:pre;letter-spacing:-0.31px;text-decoration:underline;width:200px;text-align:right">app.js?e485:50</div>
<div style="position:absolute;left:270px;top:381.1px;width:522px;height:0.8px;background:#f0f0f0"></div>
<div class="m" style="position:absolute;left:285.8px;top:385.10px;line-height:10px;font-size:8.5px;font-family:'Liberation Mono', monospace;color:#222;white-space:pre;letter-spacing:-0.31px;">/estrusManagement</div>
<div class="m" style="position:absolute;left:573px;top:385.10px;line-height:10px;font-size:8.5px;font-family:'Liberation Mono', monospace;color:#303030;white-space:pre;letter-spacing:-0.31px;text-decoration:underline;width:200px;text-align:right">app.js?e485:59</div>
<div style="position:absolute;left:270px;top:394.0px;width:522px;height:0.8px;background:#f0f0f0"></div>
<div class="m" style="position:absolute;left:285.8px;top:399.00px;line-height:10px;font-size:8.5px;font-family:'Liberation Mono', monospace;color:#222;white-space:pre;letter-spacing:-0.31px;">parsePageType: currentUrl=/estrusManagement -&gt; page=<span style="font-size:8px;letter-spacing:0">发情管理</span></div>
<div class="m" style="position:absolute;left:573px;top:399.00px;line-height:10px;font-size:8.5px;font-family:'Liberation Mono', monospace;color:#303030;white-space:pre;letter-spacing:-0.31px;text-decoration:underline;width:200px;text-align:right">index.js?5c2a:330</div>
<div style="position:absolute;left:270px;top:408.5px;width:522px;height:0.8px;background:#f0f0f0"></div>
<div class="m" style="position:absolute;left:285.8px;top:412.10px;line-height:10px;font-size:8.5px;font-family:'Liberation Mono', monospace;color:#222;white-space:pre;letter-spacing:-0.31px;">Popup componentWillReceiveProps: nextProps.visible=false,</div>
<div class="m" style="position:absolute;left:285.8px;top:421.40px;line-height:10px;font-size:8.5px;font-family:'Liberation Mono', monospace;color:#222;white-space:pre;letter-spacing:-0.31px;">this.state.modalVisible=false</div>
<div class="m" style="position:absolute;left:573px;top:412.10px;line-height:10px;font-size:8.5px;font-family:'Liberation Mono', monospace;color:#303030;white-space:pre;letter-spacing:-0.31px;text-decoration:underline;width:200px;text-align:right">index.js?3b8d:23</div>
<div style="position:absolute;left:270px;top:430.4px;width:522px;height:0.8px;background:#f0f0f0"></div>
<div class="m" style="position:absolute;left:285.8px;top:433.60px;line-height:10px;font-size:8.5px;font-family:'Liberation Mono', monospace;color:#222;white-space:pre;letter-spacing:-0.31px;">Popup componentWillReceiveProps: nextProps.visible=false,</div>
<div class="m" style="position:absolute;left:285.8px;top:442.90px;line-height:10px;font-size:8.5px;font-family:'Liberation Mono', monospace;color:#222;white-space:pre;letter-spacing:-0.31px;">this.state.modalVisible=false</div>
<div class="m" style="position:absolute;left:573px;top:433.60px;line-height:10px;font-size:8.5px;font-family:'Liberation Mono', monospace;color:#303030;white-space:pre;letter-spacing:-0.31px;text-decoration:underline;width:200px;text-align:right">index.js?3b8d:23</div>
<div style="position:absolute;left:270px;top:452.3px;width:522px;height:0.8px;background:#f0f0f0"></div>
<div class="m" style="position:absolute;left:285.8px;top:455.60px;line-height:10px;font-size:8.5px;font-family:'Liberation Mono', monospace;color:#222;white-space:pre;letter-spacing:-0.31px;">Popup componentWillReceiveProps: nextProps.visible=true,</div>
<div class="m" style="position:absolute;left:285.8px;top:465.00px;line-height:10px;font-size:8.5px;font-family:'Liberation Mono', monospace;color:#222;white-space:pre;letter-spacing:-0.31px;">this.state.modalVisible=true</div>
<div class="m" style="position:absolute;left:573px;top:455.60px;line-height:10px;font-size:8.5px;font-family:'Liberation Mono', monospace;color:#303030;white-space:pre;letter-spacing:-0.31px;text-decoration:underline;width:200px;text-align:right">index.js?3b8d:23</div>
<div style="position:absolute;left:270px;top:474.4px;width:522px;height:0.8px;background:#f0f0f0"></div>
<svg style="position:absolute;left:276px;top:479px" width="5" height="6"><path d="M0.8 0.8 L3.8 3 L0.8 5.2" stroke="#3879d9" stroke-width="1.1" fill="none"/></svg>
</body></html>
